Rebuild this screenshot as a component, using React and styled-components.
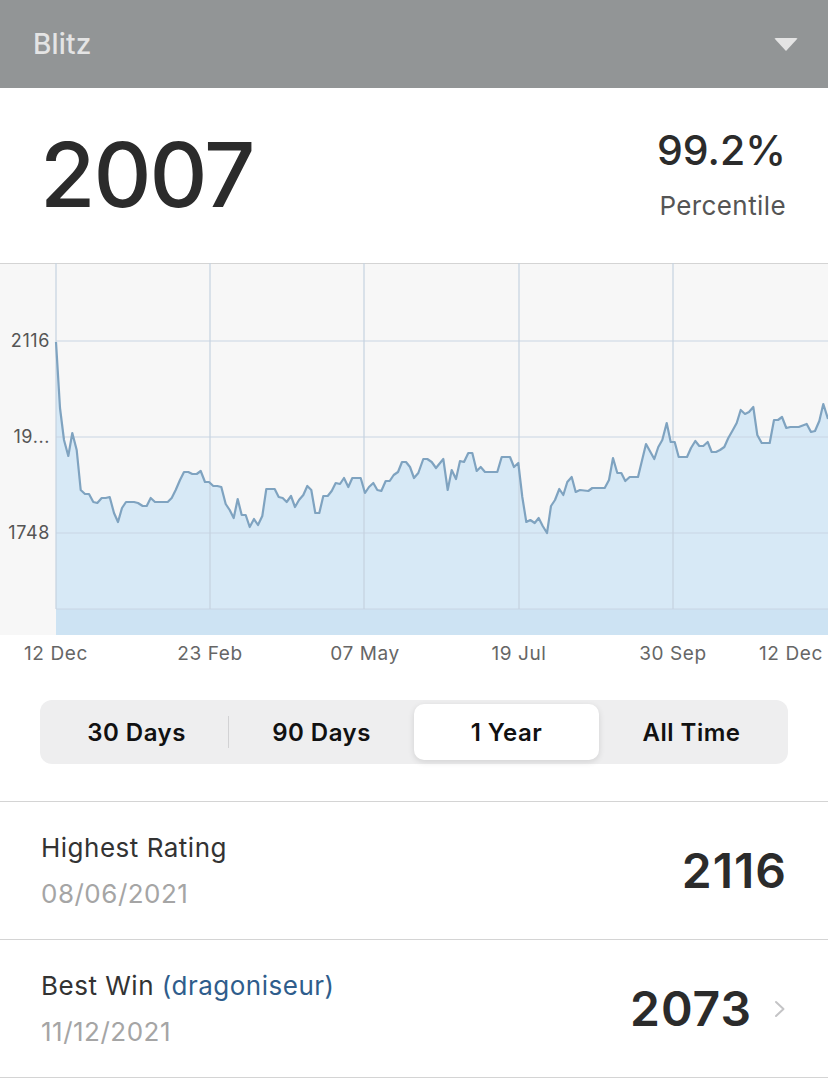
import React, { useState } from "react";
import styled, { createGlobalStyle } from "styled-components";

const GlobalStyle = createGlobalStyle`
  html, body {
    margin: 0;
    padding: 0;
    background: #ffffff;
    font-family: Inter, "Noto Sans", sans-serif;
    -webkit-font-smoothing: antialiased;
  }
`;

// rating history, in chart pixels (x, y on the page grid)
const points = [
  [56, 342], [60, 408], [64, 440], [68.3, 456], [72.3, 433], [76.7, 450], [80.7, 490],
  [85, 494], [89, 494], [93.3, 502], [97.3, 503], [101.7, 498], [105.7, 498], [109.7, 497],
  [114, 513], [118, 522], [122, 508], [126, 502], [134, 502], [138, 503], [142.7, 506],
  [146.7, 506], [150.7, 498], [155, 502], [167.7, 502], [171.7, 498], [175.7, 490],
  [180, 480], [184, 472], [188.3, 472], [192.3, 474], [196.7, 474], [200.7, 471],
  [205, 482], [209, 482], [213.3, 486], [217.3, 486], [221.3, 487], [225.7, 504],
  [229.7, 510], [233.7, 518], [237.7, 499], [241.7, 515], [245.7, 515], [249.7, 527],
  [254, 519], [258, 525], [262.3, 516], [266.3, 489], [274.7, 489], [278.7, 497],
  [282.7, 498], [286.7, 502], [291, 496], [295, 507], [299, 500], [303.3, 495],
  [307.3, 486], [311.3, 490], [315.3, 513], [319.3, 513], [323.3, 496], [327.7, 496],
  [331.7, 491], [335.7, 483], [340, 484], [344, 478], [348.3, 487], [352.3, 478],
  [360.7, 478], [365, 493], [369, 487], [373.3, 483], [377.3, 490], [381.3, 491],
  [385.7, 481], [389.7, 481], [393.7, 475], [398, 472], [402, 462], [406, 462],
  [410, 467], [414, 478], [418.3, 473], [423.3, 459], [427.3, 459], [431.7, 462],
  [436, 468], [443.3, 459], [447.7, 490], [451.7, 470], [456, 479], [460, 461],
  [464, 462], [468.3, 453], [472.3, 453], [476.7, 471], [480.7, 467], [485, 472],
  [497.3, 472], [501.7, 457], [510, 457], [514, 467], [518.3, 463], [522.3, 497],
  [526.3, 522], [530.3, 520], [534.7, 523], [538.7, 518], [542.7, 526], [547, 533],
  [551, 506], [555, 500], [559.3, 489], [563.3, 495], [567.3, 482], [571.7, 477],
  [575.7, 492], [580, 490], [588.3, 491], [592.3, 488], [604.7, 488], [609, 480],
  [613, 458], [617.3, 473], [621.3, 473], [625.3, 481], [629.7, 477], [638, 477],
  [646, 444], [654.3, 459], [658.3, 447], [662.3, 440], [666.7, 423], [670.7, 442],
  [674.7, 442], [678.7, 457], [687, 457], [691, 448], [695.3, 441], [699.3, 446],
  [703.3, 446], [707.7, 442], [711.7, 452], [716, 452], [720, 450], [724.3, 447],
  [728.3, 438], [732.3, 431], [736.7, 423], [740.7, 410], [745, 414], [749, 412],
  [753.3, 407], [757.3, 435], [761.7, 443], [769.7, 443], [774, 420], [778, 420],
  [782, 417], [786.3, 428], [790.3, 427], [798.7, 427], [806.7, 424], [811, 432],
  [815, 431], [819.3, 421], [823.3, 404], [828, 419],
];

const yTicks = [
  { y: 341, label: "2116" },
  { y: 437, label: "19..." },
  { y: 533, label: "1748" },
];
const xTicks = [
  { x: 56, label: "12 Dec" },
  { x: 210, label: "23 Feb" },
  { x: 365, label: "07 May" },
  { x: 519, label: "19 Jul" },
  { x: 673, label: "30 Sep" },
  { x: 791, label: "12 Dec" },
];
const ranges = ["30 Days", "90 Days", "1 Year", "All Time"];

function RatingChart() {
  const line = points.map(([x, y], i) => `${i ? "L" : "M"}${x} ${y}`).join(" ");
  const area = `${line} L828 635 L56 635 Z`;
  return (
    <ChartSvg viewBox="0 263 828 410">
      <rect x="0" y="263" width="828" height="372" fill="#f7f7f7" />
      <line x1="0" y1="263.5" x2="828" y2="263.5" stroke="#d4d4d4" />
      <path d={area} fill="#d7e9f6" />
      <rect x="56" y="609" width="772" height="26" fill="#cde3f3" />
      {[341, 437, 533, 609].map((y) => (
        <line key={y} x1="56" y1={y} x2="828" y2={y} stroke="#c9d6e3" strokeWidth="1.2" />
      ))}
      {[56, 210, 364, 519, 673].map((x) => (
        <line key={x} x1={x} y1="263" x2={x} y2="609" stroke="#c5d2df" strokeWidth="1.2" />
      ))}
      <path d={line} fill="none" stroke="#7fa3c0" strokeWidth="2.2" strokeLinejoin="round" />
      {yTicks.map((t) => (
        <text key={t.label} x="50" y={t.y + 6} textAnchor="end" fontSize="18" letterSpacing="0.6" fill="#555" fontFamily="Inter, sans-serif">
          {t.label}
        </text>
      ))}
      {xTicks.map((t, i) => (
        <text key={i} x={t.x} y="660" textAnchor="middle" fontSize="19" letterSpacing="0.6" fill="#666" fontFamily="Inter, sans-serif">
          {t.label}
        </text>
      ))}
    </ChartSvg>
  );
}

export default function App() {
  const [range, setRange] = useState("1 Year");

  return (
    <>
      <GlobalStyle />
      <Page>
        <TopBar>
          <TopTitle>Blitz</TopTitle>
          <Caret />
        </TopBar>

        <Summary>
          <Rating>2007</Rating>
          <Percentile>
            <strong>99.2%</strong>
            <span>Percentile</span>
          </Percentile>
        </Summary>

        <RatingChart />

        <Segments>
          {ranges.map((r, i) => (
            <Segment
              key={r}
              $active={r === range}
              $divider={i === 0}
              onClick={() => setRange(r)}
            >
              {r}
            </Segment>
          ))}
        </Segments>

        <StatList>
          <StatRow>
            <StatText>
              <StatLabel>Highest Rating</StatLabel>
              <StatDate>08/06/2021</StatDate>
            </StatText>
            <StatValue>2116</StatValue>
          </StatRow>
          <StatRow>
            <StatText>
              <StatLabel>
                Best Win <Opponent>(dragoniseur)</Opponent>
              </StatLabel>
              <StatDate>11/12/2021</StatDate>
            </StatText>
            <StatValue>
              2073
              <Chevron viewBox="0 0 12 20">
                <path d="M2 3 L9.5 10 L2 17" fill="none" stroke="#c4c4c6" strokeWidth="2" strokeLinecap="round" strokeLinejoin="round" />
              </Chevron>
            </StatValue>
          </StatRow>
        </StatList>
      </Page>
    </>
  );
}

const Page = styled.div`
  width: 828px;
  min-height: 1092px;
  background: #fff;
  overflow: hidden;
`;

const TopBar = styled.div`
  height: 88px;
  background: #929596;
  display: flex;
  align-items: center;
  justify-content: space-between;
  padding: 0 30px 0 33px;
  box-sizing: border-box;
`;

const TopTitle = styled.div`
  color: #e4e4e4;
  font-size: 28px;
  font-weight: 500;
  letter-spacing: 0.2px;
  margin-top: -1px;
`;

const Caret = styled.div`
  width: 0;
  height: 0;
  border-left: 12px solid transparent;
  border-right: 12px solid transparent;
  border-top: 13px solid #e4e4e4;
  border-radius: 2px;
`;

const Summary = styled.div`
  height: 175px;
  display: flex;
  justify-content: space-between;
  padding: 0 42px 0 40px;
  box-sizing: border-box;
`;

const Rating = styled.div`
  font-size: 90px;
  font-weight: 500;
  color: #2b2b2b;
  letter-spacing: -2px;
  line-height: 1;
  margin-top: 42px;
`;

const Percentile = styled.div`
  display: flex;
  flex-direction: column;
  align-items: flex-end;
  margin-top: 39px;

  strong {
    font-size: 41px;
    font-weight: 500;
    color: #2b2b2b;
    line-height: 1.15;
    letter-spacing: 0;
  }
  span {
    font-size: 26px;
    letter-spacing: 0.4px;
    color: #555;
    margin-top: 16px;
  }
`;

const ChartSvg = styled.svg`
  display: block;
  width: 828px;
  height: 410px;
`;

const Segments = styled.div`
  margin: 27px 40px 0;
  height: 64px;
  padding: 4px;
  box-sizing: border-box;
  background: #eeeeef;
  border-radius: 12px;
  display: grid;
  grid-template-columns: repeat(4, 1fr);
`;

const Segment = styled.div`
  position: relative;
  display: flex;
  align-items: center;
  justify-content: center;
  font-size: 24px;
  font-weight: 600;
  letter-spacing: 0.5px;
  color: #111;
  border-radius: 10px;
  cursor: pointer;
  background: ${(p) => (p.$active ? "#fff" : "transparent")};
  box-shadow: ${(p) => (p.$active ? "0 2px 6px rgba(0,0,0,0.12)" : "none")};

  &::after {
    content: "";
    display: ${(p) => (p.$divider ? "block" : "none")};
    position: absolute;
    right: 0;
    top: 12px;
    bottom: 12px;
    width: 1px;
    background: #d2d2d4;
  }
`;

const StatList = styled.div`
  margin-top: 37px;
  border-top: 1px solid #d4d4d4;
`;

const StatRow = styled.div`
  height: 137px;
  border-bottom: 1px solid #d4d4d4;
  display: flex;
  align-items: center;
  justify-content: space-between;
  padding: 0 41px 0 41px;
`;

const StatText = styled.div`
  display: flex;
  flex-direction: column;
  gap: 15px;
`;

const StatLabel = styled.div`
  font-size: 26px;
  letter-spacing: 0.5px;
  color: #333;
`;

const Opponent = styled.span`
  color: #2f5d8c;
`;

const StatDate = styled.div`
  font-size: 26px;
  letter-spacing: 0.5px;
  color: #a5a5a5;
`;

const StatValue = styled.div`
  display: flex;
  align-items: center;
  gap: 22px;
  font-size: 48px;
  font-weight: 600;
  color: #2b2b2b;
  letter-spacing: 1px;
`;

const Chevron = styled.svg`
  width: 12px;
  height: 20px;
  margin-right: 1px;
`;
